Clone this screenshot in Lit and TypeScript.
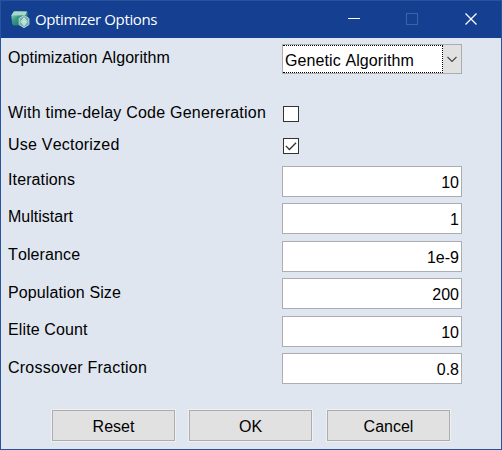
import { LitElement, html, css, svg } from "lit";
import { customElement, property } from "lit/decorators.js";

@customElement("title-bar")
class TitleBar extends LitElement {
  static styles = css`
    :host { display: flex; height: 37px; align-items: center; background: #154091; color: #fff; }
    .logo { width: 20px; height: 18px; margin-left: 10px; flex: none; }
    .title { flex: 1; margin: 0 0 1px 4px; font: 15px/20px "Open Sans", "Noto Sans", sans-serif; letter-spacing: -0.38px; white-space: nowrap; }
    .glyph { width: 58px; height: 37px; flex: none; }
    .glyph.last { margin-right: 1px; }
  `;
  render() {
    return html`
      <svg class="logo" viewBox="0 0 20 18">
        <defs>
          <linearGradient id="box" x1="0" y1="0" x2="1" y2="1">
            <stop offset="0" stop-color="#b5dfd6" />
            <stop offset=".4" stop-color="#3c9988" />
            <stop offset="1" stop-color="#07624f" />
          </linearGradient>
        </defs>
        <path d="M.3 4.5L2.5 .8Q3 .3 4 .3H15Q16.7 .3 16.7 2V12Q16 14.5 13.5 14.5H3.5Q1.5 14.5 1.2 12.5Z" fill="url(#box)" />
        <path d="M.6 4.5L2.7 1.1Q3 .6 4 .6H16L14.3 4.2Z" fill="#a9d8cd" />
        <path d="M13 4.6L17.9 7.4V13.6L13 16.7L8.2 13.6V7.4Z" fill="#6fb1aa" stroke="#b4dbd6" />
        <path d="M13 6.8L16 10.7L13 14.6L10 10.7Z" fill="#8cc5be" stroke="#dcf2ee" stroke-width=".9" />
        <path d="M13 8.2V13.2M11 10.7H15" stroke="#eefaf8" stroke-width=".8" />
      </svg>
      <span class="title">Optimizer Options</span>
      <svg class="glyph" viewBox="0 0 58 37"><path d="M22 17.5H34" stroke="#fff" /></svg>
      <svg class="glyph" viewBox="0 0 58 37"><rect x="22.5" y="12.5" width="11" height="11" fill="none" stroke="#4163a5" /></svg>
      <svg class="glyph last" viewBox="0 0 58 37"><path d="M23.5 12.5L34.5 23.5M34.5 12.5L23.5 23.5" stroke="#fff" stroke-width="1.25" /></svg>
    `;
  }
}

@customElement("combo-box")
class ComboBox extends LitElement {
  @property() value = "";
  static styles = css`
    :host { display: flex; box-sizing: border-box; height: 30px; width: 180px; border: 1px solid #abadb3; background: #fff; }
    .value { flex: 1; box-sizing: border-box; border: 1px dotted #000; border-left: 0; padding-left: 2px; line-height: 30px; letter-spacing: 0.1px; white-space: nowrap; height: 28px; }
    .arrow { width: 18px; background: #e1e1e1; flex: none; }
  `;
  render() {
    return html`<div class="value">${this.value}</div>
      <svg class="arrow" viewBox="0 0 18 28"><path d="M4.5 12L9 16.5L13.5 12" fill="none" stroke="#444" stroke-width="1.1" /></svg>`;
  }
}

@customElement("check-box")
class CheckBox extends LitElement {
  @property({ type: Boolean }) checked = false;
  static styles = css`
    :host { display: block; margin-left: 1px; height: 16px; width: 16px; }
    .box { display: block; width: 16px; height: 16px; }
  `;
  render() {
    return html`<svg class="box" viewBox="0 0 16 16">
      <rect x=".5" y=".5" width="15" height="15" fill="#fff" stroke="#333" />
      ${this.checked ? svg`<path d="M2.8 7.9L6.4 11.5L13.1 4.8" fill="none" stroke="#333" stroke-width="1.3" />` : ""}
    </svg>`;
  }
}

const fields = [
  { name: "Iterations", value: "10", kind: "tight" },
  { name: "Multistart", value: "1", kind: "normal" },
  { name: "Tolerance", value: "1e-9", kind: "tight" },
  { name: "Population Size", value: "200", kind: "low tight" },
  { name: "Elite Count", value: "10", kind: "tight" },
  { name: "Crossover Fraction", value: "0.8", kind: "low wide" },
];

@customElement("app-root")
class AppRoot extends LitElement {
  static styles = css`
    :host { display: flex; flex-direction: column; box-sizing: border-box; width: 502px; height: 450px; border: 1px solid #2a539f; background: #dfe6f0; color: #000; font: 16px/18px "Liberation Sans", Arial, sans-serif; font-kerning: none; overflow: hidden; }
    .form { display: grid; grid-template-columns: 274px 180px; grid-template-rows: 62px 32px 28px 37px 38px 37px 38px 37px 31px; align-items: start; padding: 6px 0 0 7px; }
    .label { white-space: nowrap; margin-top: 5px; }
    .label.low { margin-top: 6px; }
    .label.check { margin-top: -2px; }
    .label.slight { letter-spacing: 0.04px; }
    .label.tight { letter-spacing: 0.12px; }
    .label.wide { letter-spacing: 0.22px; }
    .field { box-sizing: border-box; width: 180px; height: 31px; border: 1px solid #abadb3; background: #fff; text-align: right; line-height: 31px; padding-right: 2px; }
    .actions { display: flex; gap: 14px; margin: 26px 0 0 51px; }
    .button { box-sizing: border-box; width: 123px; height: 31px; border: 1px solid #adadad; box-shadow: 0 0 0 1px #f0f0f0; background: #e1e1e1; padding: 0; font: inherit; color: inherit; line-height: 31px; text-align: center; }
    .button:last-child { margin-left: 1px; }
  `;
  render() {
    return html`
      <title-bar></title-bar>
      <div class="form">
        <span class="label slight">Optimization Algorithm</span><combo-box value="Genetic Algorithm"></combo-box>
        <span class="label check wide">With time-delay Code Genereration</span><check-box></check-box>
        <span class="label check wide">Use Vectorized</span><check-box checked></check-box>
        ${fields.map((f) => html`<span class="label ${f.kind}">${f.name}</span><div class="field">${f.value}</div>`)}
      </div>
      <div class="actions">
        ${["Reset", "OK", "Cancel"].map((t) => html`<button class="button">${t}</button>`)}
      </div>
    `;
  }
}
